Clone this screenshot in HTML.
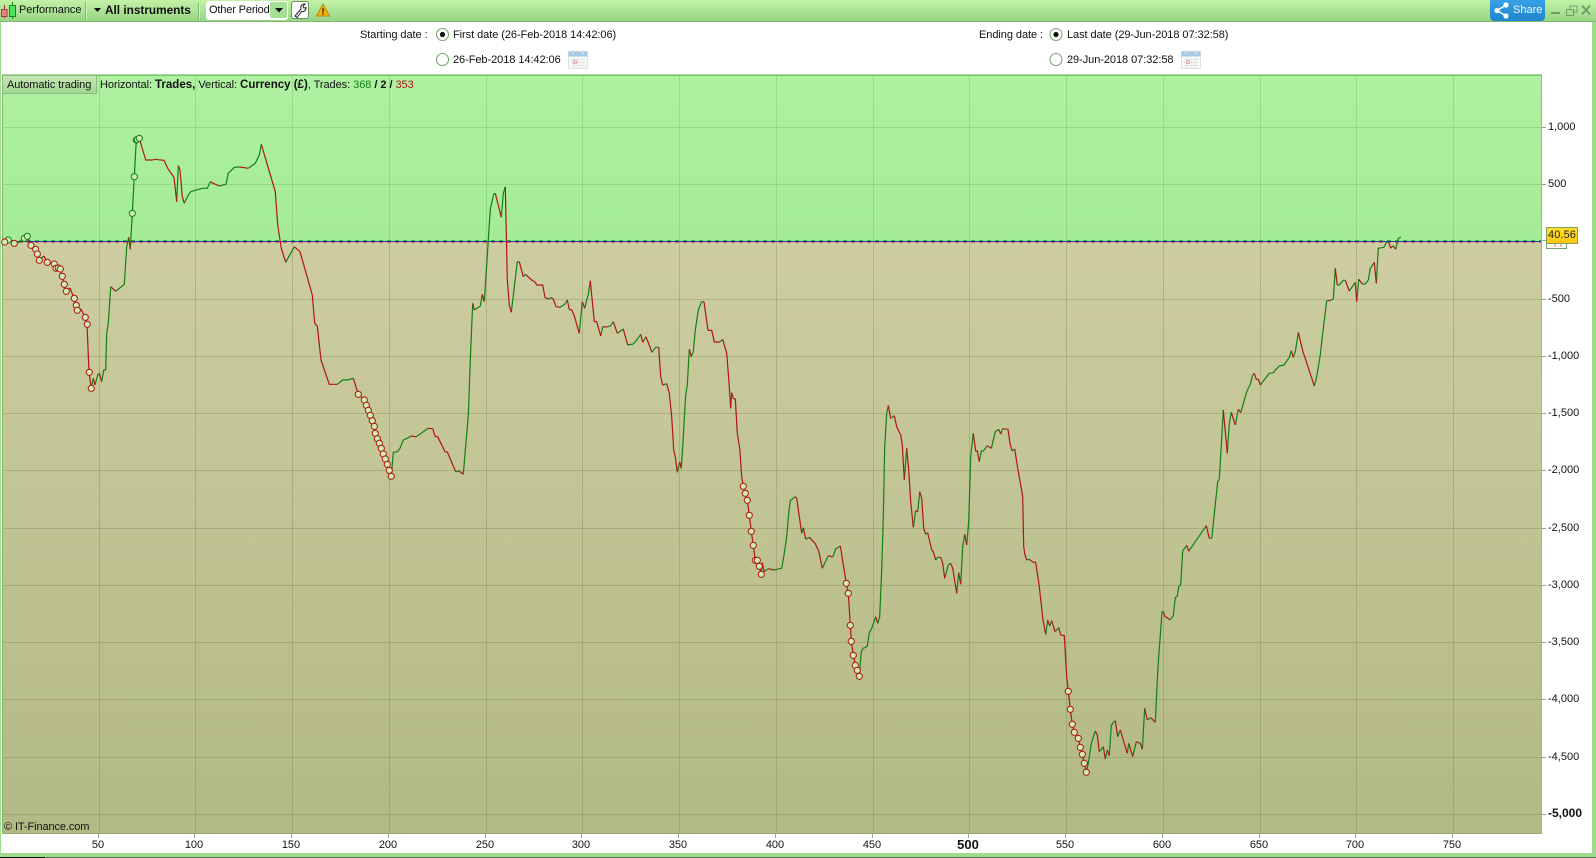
<!DOCTYPE html>
<html><head><meta charset="utf-8"><title>Performance</title>
<style>
html,body{margin:0;padding:0}
body{width:1596px;height:858px;position:relative;overflow:hidden;background:#fff;font:11px "Liberation Sans",Arial,sans-serif;color:#111}
.a{position:absolute;white-space:nowrap}
.yl{position:absolute;left:1548px;white-space:nowrap;font-size:11px;line-height:14px;color:#111}
.xl{position:absolute;top:838px;width:40px;text-align:center;font-size:11px;line-height:14px;color:#111}
.d{letter-spacing:-.06px}
svg{position:absolute;left:0;top:0;display:block}
circle.m{r:3.1px}
</style></head><body>
<div class="a" style="left:0;top:0;width:1596px;height:21px;background:linear-gradient(#c2f2a6,#98d586);border-bottom:1px solid #7fb96d"></div>
<div class="a" style="left:0;top:22px;width:1px;height:831px;background:#9fdc8c"></div>
<div class="a" style="left:1592px;top:22px;width:4px;height:831px;background:#9fdc8c"></div>
<div class="a" style="left:0;top:853px;width:1596px;height:4px;background:#9fdc8c"></div>
<div class="a" style="left:0;top:857px;width:1596px;height:1px;background:#666"></div>
<div class="a" style="left:0;top:857px;width:45px;height:1px;background:#111"></div>

<div class="a" style="left:19px;top:3px;line-height:15px;letter-spacing:-.05px">Performance</div>
<div class="a" style="left:85px;top:2px;width:1px;height:17px;background:#7fb96d;box-shadow:1px 0 0 #d4f5c0"></div>
<div class="a" style="left:105px;top:2px;line-height:16px;font-weight:bold;font-size:11.800px">All instruments</div>
<div class="a" style="left:198px;top:2px;width:1px;height:17px;background:#7fb96d;box-shadow:1px 0 0 #d4f5c0"></div>
<div class="a" style="left:206px;top:1px;width:82px;height:19px;background:#fff;border-radius:3px"></div>
<div class="a" style="left:270px;top:2px;width:17px;height:16px;background:#a6e097;border-radius:2px"></div>
<div class="a" style="left:209px;top:3px;line-height:15px;letter-spacing:-.15px">Other Period</div>
<div class="a" style="left:291px;top:1px;width:16px;height:16px;background:#fff;border:1px solid #6f8f68;border-radius:3px"></div>
<div class="a" style="left:1490px;top:0;width:55px;height:21px;background:linear-gradient(#38a0e4,#1f86cc);border-radius:0 0 4px 4px"></div>
<div class="a" style="left:1513px;top:3px;line-height:15px;color:#f2f8ff;font-size:11px">Share</div>

<div class="a d" style="left:360px;top:28px;line-height:14px">Starting date :</div>
<div class="a d" style="left:453px;top:28px;line-height:14px">First date (26-Feb-2018 14:42:06)</div>
<div class="a d" style="left:453px;top:53px;line-height:14px">26-Feb-2018 14:42:06</div>
<div class="a d" style="left:979px;top:28px;line-height:14px">Ending date :</div>
<div class="a d" style="left:1067px;top:28px;line-height:14px">Last date (29-Jun-2018 07:32:58)</div>
<div class="a d" style="left:1067px;top:53px;line-height:14px">29-Jun-2018 07:32:58</div>

<svg width="1596" height="858" viewBox="0 0 1596 858">
<defs>
<linearGradient id="up" x1="0" y1="0" x2="0" y2="1"><stop offset="0" stop-color="#aef1a1"/><stop offset="1" stop-color="#a5ec96"/></linearGradient>
<linearGradient id="dn" x1="0" y1="0" x2="0" y2="1"><stop offset="0" stop-color="#cdcda1"/><stop offset="1" stop-color="#b2b984"/></linearGradient>
<linearGradient id="tag" x1="0" y1="0" x2="0" y2="1"><stop offset="0" stop-color="#ffe02a"/><stop offset="1" stop-color="#fdc70c"/></linearGradient>
<linearGradient id="tabg" x1="0" y1="0" x2="0" y2="1"><stop offset="0" stop-color="#c8e8b4"/><stop offset="1" stop-color="#a0d690"/></linearGradient>
</defs>
<!-- toolbar icons -->
<path d="M4.500 5v4M4.500 15v3" stroke="#a03030" stroke-width="1" fill="none"/>
<rect x="1.500" y="9.500" width="5.500" height="7" fill="#f08080" stroke="#a04040"/>
<path d="M12.500 2v4M12.500 16v3" stroke="#118a11" stroke-width="1" fill="none"/>
<rect x="9.500" y="5.500" width="6" height="11" fill="#4fe060" stroke="#108a10"/>
<path d="M94 8h7l-3.500 4z" fill="#111"/>
<path d="M275 8h8l-4 4.500z" fill="#111"/>
<path d="M295 16l6-7c-1-3 1-5 4-5l-2 2.500 1 1.500 2-.5c0 3-2 4.500-4.500 4L297 17.500z" fill="#fff" stroke="#222" stroke-width="1"/>
<path d="M323 4l6.500 12h-13z" fill="#f4b40c" stroke="#b88a10" stroke-width="1"/>
<rect x="322.400" y="8" width="1.300" height="4.500" fill="#222"/><rect x="322.400" y="13.300" width="1.300" height="1.400" fill="#222"/>
<!-- share -->
<path d="M1506 5L1497 10.500L1506 16" stroke="#fff" stroke-width="1.400" fill="none"/>
<circle cx="1506" cy="5" r="2.600" fill="#fff"/><circle cx="1497" cy="10.500" r="2.600" fill="#fff"/><circle cx="1506" cy="16" r="2.600" fill="#fff"/>
<!-- window -->
<rect x="1551" y="12" width="9" height="2" fill="#6f9f68"/>
<rect x="1570" y="6" width="7" height="6" fill="none" stroke="#6f9f68"/><rect x="1566.500" y="9.500" width="7" height="6" fill="#a8de94" stroke="#6f9f68"/>
<path d="M1582 5.500l8 9M1590 5.500l-8 9" stroke="#6f9f68" stroke-width="2" fill="none"/>
<!-- radios -->
<g fill="#fff" stroke="#7aa870" stroke-width="1.100">
<circle cx="442.500" cy="34.500" r="6"/><circle cx="442.500" cy="59.500" r="6"/><circle cx="1056" cy="34.500" r="6"/><circle cx="1056" cy="59.500" r="6"/>
</g>
<circle cx="442.500" cy="34.500" r="2.600" fill="#111"/><circle cx="1056" cy="34.500" r="2.600" fill="#111"/>
<!-- calendars -->
<rect x="568.500" y="51.500" width="19" height="17" fill="#f7f8f9" stroke="#dde2e6"/>
<rect x="568.500" y="51.500" width="19" height="5" fill="#a6cbe8"/>
<path d="M573 50v4M583 50v4" stroke="#d8dfe4" stroke-width="1.500"/>
<path d="M571 59.500h14M571 62.500h14M571 65.500h14M574 57.500v10M578 57.500v10M582 57.500v10" stroke="#e2e5e8" fill="none"/>
<rect x="573.500" y="60.500" width="3" height="3" fill="#f8d0d0" stroke="#e89a9a" stroke-width=".7"/>
<rect x="1181.500" y="51.500" width="19" height="17" fill="#f7f8f9" stroke="#dde2e6"/>
<rect x="1181.500" y="51.500" width="19" height="5" fill="#a6cbe8"/>
<path d="M1186 50v4M1196 50v4" stroke="#d8dfe4" stroke-width="1.500"/>
<path d="M1184 59.500h14M1184 62.500h14M1184 65.500h14M1187 57.500v10M1191 57.500v10M1195 57.500v10" stroke="#e2e5e8" fill="none"/>
<rect x="1186.500" y="60.500" width="3" height="3" fill="#f8d0d0" stroke="#e89a9a" stroke-width=".7"/>
<!-- plot -->
<rect x="2" y="74" width="1540" height="1" fill="#a8dd98"/>
<rect x="2" y="75" width="1540" height="1" fill="#7fbf70"/>
<rect x="3" y="76" width="1538" height="165" fill="url(#up)"/>
<rect x="3" y="241" width="1538" height="592" fill="url(#dn)"/>
<rect x="2" y="75" width="1" height="759" fill="#7db86b"/>
<rect x="1541" y="75" width="1" height="759" fill="#8cc27c"/>
<rect x="2" y="833" width="1540" height="1" fill="#94a878"/>
<!-- grid -->
<g stroke="rgba(70,130,60,.2)" stroke-width="1" fill="none">
<path d="M3 127.500H1541M3 184.500H1541"/>
<path d="M99.500 76V241M195.500 76V241M292.500 76V241M389.500 76V241M486.500 76V241M582.500 76V241M679.500 76V241M776.500 76V241M873.500 76V241M969.500 76V241M1066.500 76V241M1163.500 76V241M1260.500 76V241M1356.500 76V241M1453.500 76V241"/>
</g>
<g stroke="rgba(90,100,50,.24)" stroke-width="1" fill="none">
<path d="M3 299.500H1541M3 356.500H1541M3 413.500H1541M3 470.500H1541M3 528.500H1541M3 585.500H1541M3 642.500H1541M3 699.500H1541M3 757.500H1541M3 814.500H1541"/>
<path d="M99.500 241V833M195.500 241V833M292.500 241V833M389.500 241V833M486.500 241V833M582.500 241V833M679.500 241V833M776.500 241V833M873.500 241V833M969.500 241V833M1066.500 241V833M1163.500 241V833M1260.500 241V833M1356.500 241V833M1453.500 241V833"/>
</g>
<!-- ticks -->
<path d="M98.500 834v4M194.500 834v4M291.500 834v4M388.500 834v4M485.500 834v4M581.500 834v4M678.500 834v4M775.500 834v4M872.500 834v4M968.500 834v4M1065.500 834v4M1162.500 834v4M1259.500 834v4M1355.500 834v4M1452.500 834v4" stroke="#8aac80" fill="none"/>
<path d="M1542 127.500h4M1542 184.500h4M1542 240.500h4M1542 299.500h4M1542 356.500h4M1542 413.500h4M1542 470.500h4M1542 528.500h4M1542 585.500h4M1542 642.500h4M1542 699.500h4M1542 757.500h4M1542 814.500h4" stroke="#8aac80" fill="none"/>
<!-- zero lines -->
<path d="M3 240.500H1541" stroke="#25b04a" stroke-dasharray="4 4" fill="none"/>
<path d="M3 241.500H1541" stroke="#2a3a9a" fill="none"/>
<path d="M3 242.500H1541" stroke="#e0506a" stroke-dasharray="4 4" fill="none"/>
<!-- curve -->
<path fill="none" stroke="#128012" stroke-width="1.200" stroke-linejoin="round" d="M3 243L8 241M14 243L24 241 24 238 27 236M39 260L44 256M66 291L70 288M77 310L81 309M91.300 388.300L93.300 378.300M95 385L97.700 375 99.300 373.300M101.700 381.700L103.700 370 105.700 370 106.700 333.300 108.300 323.300 110.700 286.700M115.700 291.300L124.300 284.300 126.700 246.700 128.700 237.300M130.300 249.300L132.300 213.300 134.300 176.700 136.300 140 139.300 138.300M152.700 160L154.300 159.300M176.700 201.700L178.300 165.700M184.300 203.300L188.300 195 190.700 191.700 195 190.300 202.300 188.300 207.300 188.300 210.300 181.700M219.300 186L226 184.300 228.300 173.300 234.300 167.300 240 167M248.300 168.300L255.300 163.300 259.300 155 261.300 144.300M285.700 262.300L294.300 246.700M337.300 384.300L342.700 380 347.300 380 353.300 378.300M391.300 476.300L393.300 452.300 397.300 451.700 400 448.300 403.300 440 408.300 437.700 410.700 436M416 436.700L423.300 431.700 428.300 428.300M455.700 471.700L459 471M463.300 474.300L468.300 415 470.300 360 472.700 303.300M474.300 310L480.300 306 482.300 294.300M484.300 301.700L490.300 209.300 493.700 194 495.300 193.300M501.300 217.300L503.300 193.300 505.300 186.700M511.300 312.300L517.300 261.700 519.300 261.700M523.300 276.700L525.300 274.300M548.300 299L551 297.700M560 307.300L565 304 567.300 300M579.300 333.300L582.300 301.700M584.700 308.300L586.700 300 588.300 295 590.300 280.700M600.700 336L602.700 326.700M607.300 327L610.700 325.700 613.300 321.700M617.300 333.300L623.300 329M627.700 345L633.300 344 637.300 339.300 640.700 334.300M642.700 342.300L646 336.700M652 352.300L655.700 347.300 658.700 347.300M662.700 385L666.700 383.700M677.300 472.300L679.700 462M681.300 468.300L683.300 436.700 685.700 395 687.300 385 689.300 349.300M691.300 356.700L693.300 351.700 695.300 330 698.300 310 701.700 301.700 704 301.700M720 342L722.700 339.300M730.700 408.300L731.700 392.700M761.300 574.300L762.300 562.700M764.300 571.700L768.300 568.700M774 570L781.700 568.300 784.300 553.300 786.700 536.700 788.700 513.300 790.300 500.700 795 496.700M801.700 533.300L803.300 527.700M805.700 539.300L809.300 537.300M822.300 568.300L828.300 555.700M832.700 557L835.700 549 840.300 546M859.300 676.300L861.300 651.700 863.300 648.300 867.300 646.300 869.300 632.700 871.700 628.300 875.700 616.700M877.700 623.300L879.700 616.700 881.700 570 883.300 516.700 884.700 446.700 886.700 413.300 888.300 405.500M890.700 418.300L894.300 415.700M904.300 480L906.700 448.300M913.300 527.300L915.700 510.700M917.700 511.700L919.700 491.700M925.700 534.300L927.700 532.700M935.700 560L937.700 557.300 940.700 557.300M944.700 578.300L948.300 565 950.700 563.300M956.700 593.300L958.700 572.700M960.700 584.300L962.700 546.700 964.700 534.300M966.700 545L968.700 521.700 970.700 456.700 973.300 433.300M979.300 461.700L981.300 451 983.300 451 987.300 445.700M991.300 448.300L995.300 431.700 998.700 429.300M1000.700 434L1002.700 428.700M1012 451L1014.700 449M1026.700 560L1029.300 559.300M1045.700 634.300L1047.700 620M1049.700 626L1051.700 620.700M1055 631.700L1058.700 627.700M1086.300 772.300L1088.300 763.300 1091.300 743.300 1095.300 731M1099.300 751.700L1103.300 746.700M1105.300 759L1107.300 750M1109.300 755.700L1111.300 725.700 1113.300 722.300 1115.300 720.700M1117.700 736.700L1120.300 730M1127.300 753.300L1128.700 743.300M1132.700 756.700L1136.300 741.700M1142.300 749.300L1144.700 708.300M1147.300 720L1150.700 717.700M1155.300 722.300L1158 666.700 1162 611.700 1163.300 611.700M1169.700 620L1173.300 616 1175.300 597.700 1177.300 596 1178.700 586.700 1180.700 584.300 1182.700 551 1186.700 545.300M1188.700 551.300L1206.300 525.700M1209.300 538.300L1211.700 538.300 1217.700 481.700 1219.300 479.300 1223.300 410M1227.300 453.300L1229.300 423.300 1231.300 412.300M1235.300 425L1238.300 409.300M1240.700 412.700L1246.700 391.700 1250.700 383.300 1252.300 375.700 1254.300 373.300M1260.300 385L1269.300 373.300 1273.300 372.700 1276 369.300 1279.300 366 1284 365 1289.300 357.300 1291.300 350.700M1293.300 357.300L1295.300 351.700 1298.300 332.300M1314.300 386L1316.700 376.700 1320.300 355 1322.300 336.700 1326.700 300.700M1330 300.700L1333.300 299 1335.300 268.300M1337.300 285L1339.300 285 1343.300 280.300 1345.300 280.300M1349.300 291L1355.300 282.300M1356.700 301.700L1358.700 279.300M1362.300 284L1365.300 284 1368.300 280 1370.300 268.300 1374.300 262.300M1376.300 283.300L1378.300 248.300 1384 247.300 1386.300 242.300 1388.700 242.300M1390.700 248.300L1392.700 245.700M1395.700 249.300L1398.300 238.300 1401 237"/>
<path fill="none" stroke="#b01515" stroke-width="1.200" stroke-linejoin="round" d="M8 241L14 243M27 236L31 245 36 249 37 254 39 260M44 256L47 262 54 264 56 268 58 268 60 269 62 276 64 284 66 291M70 288L74 298 76 305 77 310M81 309L85 317 87 324 89 372 91.300 388.300M93.300 378.300L95 385M99.300 373.300L101.700 381.700M110.700 286.700L115.700 291.300M128.700 237.300L130.300 249.300M139.300 138.300L145.700 160 152.700 160M154.300 159.300L164 160.300 167.700 168.300 174 177.300 176.700 201.700M178.300 165.700L180 170 182.300 196.700 184.300 203.300M210.300 181.700L213.300 183.300 219.300 186M240 167L248.300 168.300M261.300 144.300L275.300 191.700 277.700 225 281.300 248.300 285.700 262.300M294.300 246.700L300 251.700 312.300 295 314.700 323.300 317.300 326 321 360 329.300 384.300 337.300 384.300M353.300 378.300L358.300 394.300 364.300 400 366.300 405.300 368.300 410.300 370.300 415.300 372.300 420.700 374.300 426.300 375.300 433.300 377.300 438.700 379.300 443.300 381.300 448.300 383.300 454 385.300 459 387.300 464.300 389.300 470.300 391.300 476.300M410.700 436L416 436.700M428.300 428.300L432.700 428.700 435.300 436.700 437.700 436.700 445 451.700 447.300 452 455.700 471.700M459 471L463.300 474.300M472.700 303.300L474.300 310M482.300 294.300L484.300 301.700M495.300 193.300L501.300 217.300M505.300 186.700L507.300 280 509.300 305 511.300 312.300M519.300 261.700L523.300 276.700M525.300 274.300L531.700 280 535.300 282.300 536.700 285 542.700 285 545 297.300 548.300 299M551 297.700L553.300 299 556 306.700 560 307.300M567.300 300L569.300 309.300 571.700 310 574 315 579.300 333.300M582.300 301.700L584.700 308.300M590.300 280.700L594.300 321.700 596.700 321.700 600.700 336M602.700 326.700L607.300 327M613.300 321.700L617.300 333.300M623.300 329L627.700 345M640.700 334.300L642.700 342.300M646 336.700L652 352.300M658.700 347.300L660.700 376.700 662.700 385M666.700 383.700L669.300 393.300 671.700 416.700 673.700 450 675.300 456.700 677.300 472.300M679.700 462L681.300 468.300M689.300 349.300L691.300 356.700M704 301.700L708 330.300 711.700 330.300 714.300 342 720 342M722.700 339.300L726.700 353.300 728.700 378.300 730.700 408.300M731.700 392.700L733.300 398.300 735.300 399 737.300 433.300 739.700 448.300 741.700 476.700 743.300 486.300 745.300 493.300 747.300 500.300 749.300 515.300 751.300 531.300 753.300 545.300 755.300 560.300 757.300 560.300 759.300 566.300 761.300 574.300M762.300 562.700L764.300 571.700M768.300 568.700L774 570M795 496.700L796.700 498.300 801.700 533.300M803.300 527.700L805.700 539.300M809.300 537.300L815 543.300 818.700 551 822.300 568.300M828.300 555.700L832.700 557M840.300 546L846.300 583.300 848.300 593.300 850.300 625.300 851.300 641.300 853.300 655.300 855.300 665.300 857.300 670.300 859.300 676.300M875.700 616.700L877.700 623.300M888.300 405.500L890.700 418.300M894.300 415.700L896.700 426.700 900.700 435 902.300 445 904.300 480M906.700 448.300L908.700 470 910.700 501.700 913.300 527.300M915.700 510.700L917.700 511.700M919.700 491.700L921.700 498.300 923.700 528.300 925.700 534.300M927.700 532.700L931.700 550 933.300 551.700 935.700 560M940.700 557.300L942.700 563.300 944.700 578.300M950.700 563.300L952.700 568.300 956.700 593.300M958.700 572.700L960.700 584.300M964.700 534.300L966.700 545M973.300 433.300L975.700 451 977.300 451 979.300 461.700M987.300 445.700L991.300 448.300M998.700 429.300L1000.700 434M1002.700 428.700L1008 429.300 1010 443.300 1012 451M1014.700 449L1018 470 1020.700 485 1022.700 496.700 1023.700 546.700 1025 555 1026.700 560M1029.300 559.300L1033.300 562.300 1035.700 562.300 1039.300 586.700 1043 620 1045.700 634.300M1047.700 620L1049.700 626M1051.700 620.700L1055 631.700M1058.700 627.700L1060.700 635 1064.300 635.700 1066.700 676.700 1068.300 691.300 1070.300 709.300 1072.300 724.300 1074.300 732.300 1078.300 738.300 1080.300 747.300 1082.300 754.300 1084.300 763.300 1086.300 772.300M1095.300 731L1097.300 735 1099.300 751.700M1103.300 746.700L1105.300 759M1107.300 750L1109.300 755.700M1115.300 720.700L1117.700 736.700M1120.300 730L1127.300 753.300M1128.700 743.300L1132.700 756.700M1136.300 741.700L1140.300 743.300 1142.300 749.300M1144.700 708.300L1147.300 720M1150.700 717.700L1155.300 722.300M1163.300 611.700L1165 616.700 1167.300 617.700 1169.700 620M1186.700 545.300L1188.700 551.300M1206.300 525.700L1209.300 538.300M1223.300 410L1227.300 453.300M1231.300 412.300L1235.300 425M1238.300 409.300L1240.700 412.700M1254.300 373.300L1256.300 379.300 1258.300 379.300 1260.300 385M1291.300 350.700L1293.300 357.300M1298.300 332.300L1302.700 350.700 1314.300 386M1326.700 300.700L1330 300.700M1335.300 268.300L1337.300 285M1345.300 280.300L1349.300 291M1355.300 282.300L1356.700 301.700M1358.700 279.300L1362.300 284M1374.300 262.300L1376.300 283.300M1388.700 242.300L1390.700 248.300M1392.700 245.700L1395.700 249.300"/>
<!-- markers -->
<g fill="#cdeeb0" stroke="#128012" stroke-width="1">
<circle cx="8.300" cy="240" r="3.100"/><circle cx="24.300" cy="238.300" r="3.100"/><circle cx="27.300" cy="236.300" r="3.100"/><circle cx="132.300" cy="213.300" r="3.100"/><circle cx="134.300" cy="176.700" r="3.100"/><circle cx="136.300" cy="140" r="3.100"/><circle cx="137.300" cy="139.500" r="3.100"/><circle cx="139.300" cy="138.300" r="3.100"/>
</g>
<g fill="#cdeeb0" stroke="#b01515" stroke-width="1">
<circle cx="4.700" cy="242" r="3.100"/><circle cx="14.300" cy="243.300" r="3.100"/><circle cx="31" cy="245.300" r="3.100"/><circle cx="35.700" cy="249.300" r="3.100"/><circle cx="37.300" cy="254" r="3.100"/><circle cx="39.300" cy="260.300" r="3.100"/><circle cx="47.300" cy="262.300" r="3.100"/><circle cx="54.300" cy="264" r="3.100"/><circle cx="56" cy="268.300" r="3.100"/><circle cx="58.300" cy="268" r="3.100"/><circle cx="60.300" cy="269" r="3.100"/><circle cx="62.300" cy="276.300" r="3.100"/><circle cx="64.300" cy="284.300" r="3.100"/><circle cx="66.300" cy="291.300" r="3.100"/><circle cx="74.300" cy="298.300" r="3.100"/><circle cx="76.300" cy="305.300" r="3.100"/><circle cx="77.300" cy="310.300" r="3.100"/><circle cx="85.300" cy="317.300" r="3.100"/><circle cx="87.300" cy="324.300" r="3.100"/><circle cx="89.300" cy="372.300" r="3.100"/><circle cx="91.300" cy="388.300" r="3.100"/>
<circle cx="358.300" cy="394.300" r="3.100"/><circle cx="364.300" cy="400" r="3.100"/><circle cx="366.300" cy="405.300" r="3.100"/><circle cx="368.300" cy="410.300" r="3.100"/><circle cx="370.300" cy="415.300" r="3.100"/><circle cx="372.300" cy="420.700" r="3.100"/><circle cx="374.300" cy="426.300" r="3.100"/><circle cx="375.300" cy="433.300" r="3.100"/><circle cx="377.300" cy="438.700" r="3.100"/><circle cx="379.300" cy="443.300" r="3.100"/><circle cx="381.300" cy="448.300" r="3.100"/><circle cx="383.300" cy="454" r="3.100"/><circle cx="385.300" cy="459" r="3.100"/><circle cx="387.300" cy="464.300" r="3.100"/><circle cx="389.300" cy="470.300" r="3.100"/><circle cx="391.300" cy="476.300" r="3.100"/>
<circle cx="743.300" cy="486.300" r="3.100"/><circle cx="745.300" cy="493.300" r="3.100"/><circle cx="747.300" cy="500.300" r="3.100"/><circle cx="749.300" cy="515.300" r="3.100"/><circle cx="751.300" cy="531.300" r="3.100"/><circle cx="753.300" cy="545.300" r="3.100"/><circle cx="755.300" cy="560.300" r="3.100"/><circle cx="757.300" cy="560.300" r="3.100"/><circle cx="759.300" cy="566.300" r="3.100"/><circle cx="761.300" cy="574.300" r="3.100"/>
<circle cx="846.300" cy="583.300" r="3.100"/><circle cx="848.300" cy="593.300" r="3.100"/><circle cx="850.300" cy="625.300" r="3.100"/><circle cx="851.300" cy="641.300" r="3.100"/><circle cx="853.300" cy="655.300" r="3.100"/><circle cx="855.300" cy="665.300" r="3.100"/><circle cx="857.300" cy="670.300" r="3.100"/><circle cx="859.300" cy="676.300" r="3.100"/>
<circle cx="1068.300" cy="691.300" r="3.100"/><circle cx="1070.300" cy="709.300" r="3.100"/><circle cx="1072.300" cy="724.300" r="3.100"/><circle cx="1074.300" cy="732.300" r="3.100"/><circle cx="1078.300" cy="738.300" r="3.100"/><circle cx="1080.300" cy="747.300" r="3.100"/><circle cx="1082.300" cy="754.300" r="3.100"/><circle cx="1084.300" cy="763.300" r="3.100"/><circle cx="1086.300" cy="772.300" r="3.100"/>
</g>
<!-- tab -->
<rect x="2.500" y="75.500" width="94" height="18" fill="url(#tabg)" stroke="#8cb87c"/>
<!-- price tag -->
<rect x="1546.500" y="241.500" width="20" height="7" fill="#fff" stroke="#7a9c70"/>
<path d="M1555 244v3M1561 244v3" stroke="#f07070"/>
<rect x="1546.500" y="227.500" width="31" height="16" fill="url(#tag)" stroke="#7f9f5a"/>
</svg>

<div class="a" style="left:7px;top:78px;line-height:15px;letter-spacing:-.08px">Automatic trading</div>
<div class="a" style="left:100px;top:78px;line-height:15px;letter-spacing:-.05px">Horizontal: <b style="font-size:11.500px;letter-spacing:0">Trades,</b> Vertical: <b style="font-size:11.500px;letter-spacing:0">Currency (£)</b>, Trades: <span style="color:#118211;">368</span> <b>/ 2 /</b> <span style="color:#b01515;">353</span></div>
<div class="a" style="left:4px;top:820px;line-height:14px;color:#111;letter-spacing:-.1px">© IT-Finance.com</div>
<div class="a" style="left:1548px;top:228px;line-height:15px;font-size:11px;letter-spacing:.1px;color:#222">40.56</div>

<div class="yl" style="top:120px">1,000</div>
<div class="yl" style="top:177px">500</div>
<div class="yl" style="top:292px">-500</div>
<div class="yl" style="top:349px">-1,000</div>
<div class="yl" style="top:406px">-1,500</div>
<div class="yl" style="top:463px">-2,000</div>
<div class="yl" style="top:521px">-2,500</div>
<div class="yl" style="top:578px">-3,000</div>
<div class="yl" style="top:635px">-3,500</div>
<div class="yl" style="top:692px">-4,000</div>
<div class="yl" style="top:750px">-4,500</div>
<div class="yl" style="top:806px;font-size:12px;font-weight:bold">-5,000</div>

<div class="xl" style="left:78px">50</div>
<div class="xl" style="left:174px">100</div>
<div class="xl" style="left:271px">150</div>
<div class="xl" style="left:368px">200</div>
<div class="xl" style="left:465px">250</div>
<div class="xl" style="left:561px">300</div>
<div class="xl" style="left:658px">350</div>
<div class="xl" style="left:755px">400</div>
<div class="xl" style="left:852px">450</div>
<div class="xl" style="left:948px;font-weight:bold;font-size:13px">500</div>
<div class="xl" style="left:1045px">550</div>
<div class="xl" style="left:1142px">600</div>
<div class="xl" style="left:1239px">650</div>
<div class="xl" style="left:1335px">700</div>
<div class="xl" style="left:1432px">750</div>
</body></html>
